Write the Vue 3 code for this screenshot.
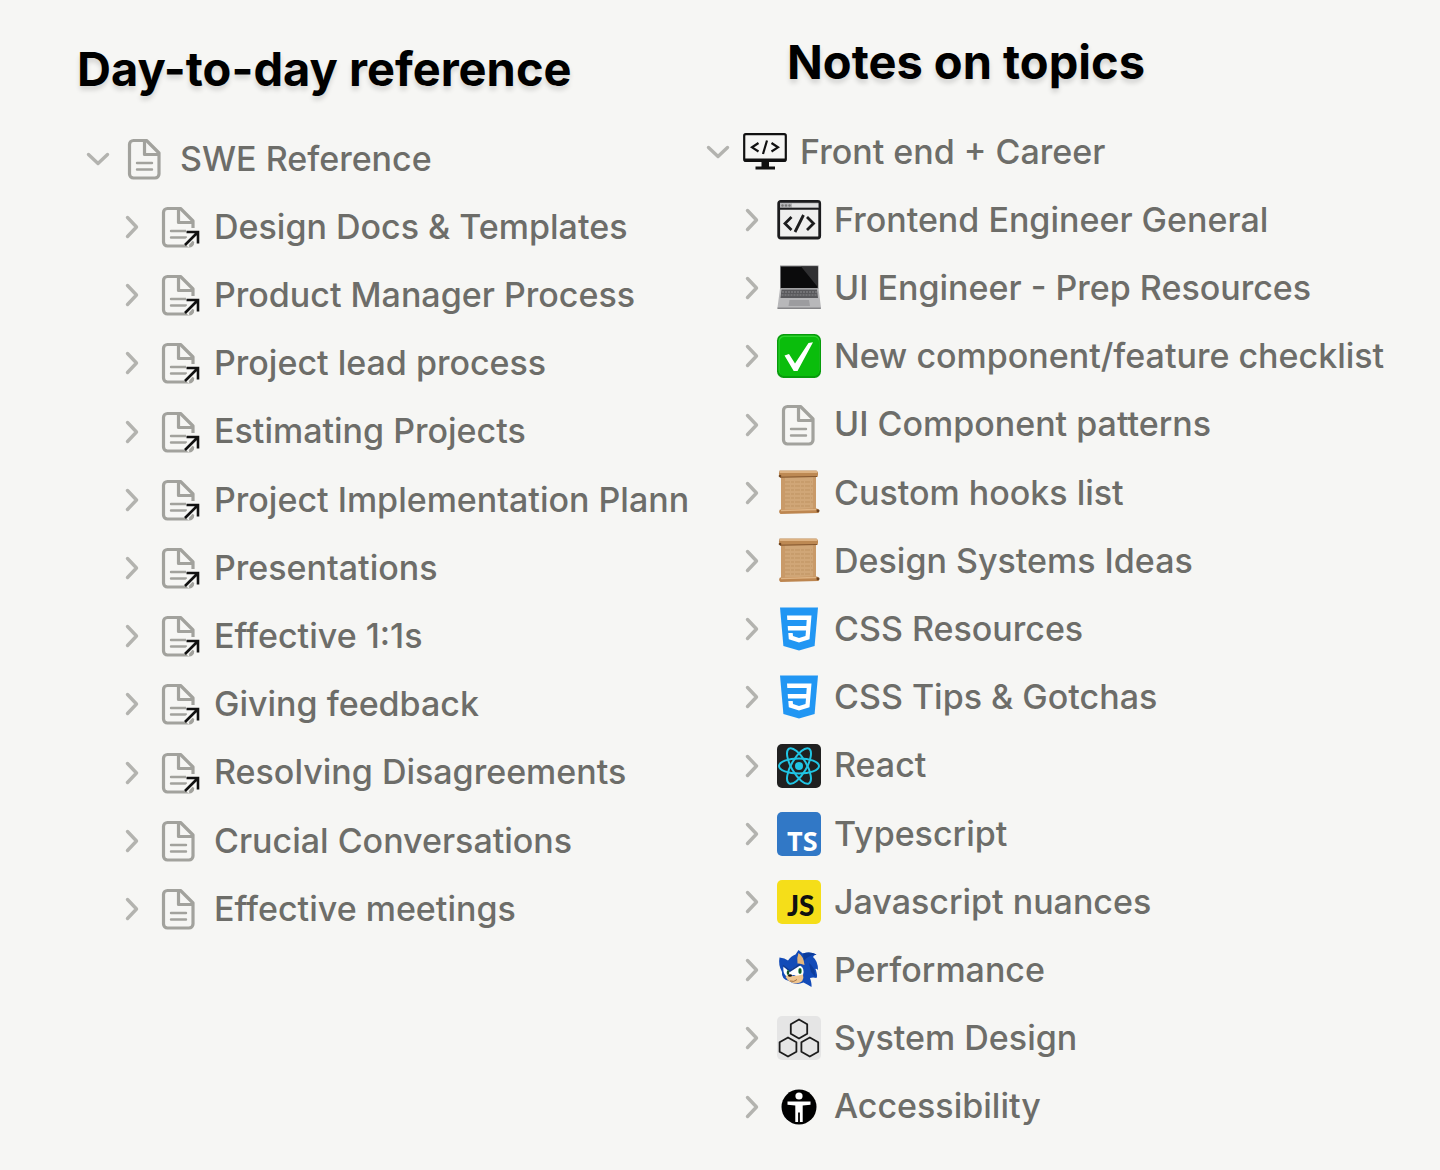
<script setup>
import { ref } from 'vue'

const columns = ref([
  {
    id: 'daily',
    title: 'Day-to-day reference',
    root: { label: 'SWE Reference', icon: 'page' },
    items: [
      { label: 'Design Docs & Templates', icon: 'alias' },
      { label: 'Product Manager Process', icon: 'alias' },
      { label: 'Project lead process', icon: 'alias' },
      { label: 'Estimating Projects', icon: 'alias' },
      { label: 'Project Implementation Plann', icon: 'alias' },
      { label: 'Presentations', icon: 'alias' },
      { label: 'Effective 1:1s', icon: 'alias' },
      { label: 'Giving feedback', icon: 'alias' },
      { label: 'Resolving Disagreements', icon: 'alias' },
      { label: 'Crucial Conversations', icon: 'page' },
      { label: 'Effective meetings', icon: 'page' },
    ],
  },
  {
    id: 'topics',
    title: 'Notes on topics',
    root: { label: 'Front end + Career', icon: 'monitor' },
    items: [
      { label: 'Frontend Engineer General', icon: 'browser' },
      { label: 'UI Engineer - Prep Resources', icon: 'laptop' },
      { label: 'New component/feature checklist', icon: 'check' },
      { label: 'UI Component patterns', icon: 'page' },
      { label: 'Custom hooks list', icon: 'scroll' },
      { label: 'Design Systems Ideas', icon: 'scroll' },
      { label: 'CSS Resources', icon: 'css' },
      { label: 'CSS Tips & Gotchas', icon: 'css' },
      { label: 'React', icon: 'react' },
      { label: 'Typescript', icon: 'ts' },
      { label: 'Javascript nuances', icon: 'js' },
      { label: 'Performance', icon: 'hedgehog' },
      { label: 'System Design', icon: 'hexes' },
      { label: 'Accessibility', icon: 'access' },
    ],
  },
])

const rowsOf = (col) => [
  { ...col.root, root: true },
  ...col.items,
]
</script>

<template>
  <main class="page">
    <section v-for="col in columns" :key="col.id" class="column" :class="col.id">
      <h1 class="title">{{ col.title }}</h1>
      <ul class="tree">
        <li v-for="row in rowsOf(col)" :key="row.label" class="row" :class="{ child: !row.root }">
          <button class="toggle" type="button" :aria-expanded="!!row.root" :aria-label="'Toggle ' + row.label">
            <svg class="chevron" viewBox="0 0 24 24" aria-hidden="true">
              <path v-if="row.root" d="M2.500 7.500l9.500 9 9.500-9" />
              <path v-else d="M7.500 2.500l9 9.500-9 9.500" />
            </svg>
          </button>
          <svg class="icon" viewBox="0 0 44 44" aria-hidden="true">
            <g v-if="row.icon === 'page' || row.icon === 'alias'" fill="none" stroke="#a2a29d" stroke-width="3.200" stroke-linejoin="round" stroke-linecap="round">
              <path d="M10.500 3.500H23.500L36 16V37a4 4 0 0 1-4 4H10.500a4 4 0 0 1-4-4V7.500a4 4 0 0 1 4-4z" />
              <path d="M21.500 4.500V17.500H35" />
              <path d="M14 26H29M14 32.500H29" stroke-width="2.400" />
              <g v-if="row.icon === 'alias'" stroke-linecap="butt" stroke-linejoin="miter">
                <path d="M29 27H41V39M41 27L28.500 39.500" stroke="#f6f6f4" stroke-width="8" />
                <path d="M32.500 41L36.500 36.500" stroke-width="2.500" />
                <path d="M29.500 27H41V38.500M41 27L28 40" stroke="#111" stroke-width="2.600" />
              </g>
            </g>

            <g v-else-if="row.icon === 'monitor'">
              <rect x="1.200" y="4.200" width="41.600" height="26.600" rx="1.500" fill="none" stroke="#111" stroke-width="2.200" />
              <path d="M1 28.500H43V31.500H1z" fill="#111" />
              <path d="M18.500 31h7.500v5.500h6v3H12.500v-3h6z" fill="#111" />
              <path d="M15.500 13L9 17.300l6.500 4.200M28.500 13l6.500 4.300-6.500 4.200M24 10.500L20 24" fill="none" stroke="#111" stroke-width="2.200" />
            </g>

            <g v-else-if="row.icon === 'browser'">
              <rect x="1.700" y="3.500" width="41" height="36.500" rx="2" fill="#efefef" stroke="#1c1c1e" stroke-width="2.800" />
              <path d="M3 4.800H41.500V10.500H3z" fill="#b4b4b6" />
              <path d="M15 5.500H41V9.500H15z" fill="#dededf" />
              <path d="M2 10.800H42.500" stroke="#1c1c1e" stroke-width="2" />
              <circle cx="5.500" cy="7.500" r="1.200" fill="#777" />
              <circle cx="9" cy="7.500" r="1.200" fill="#777" />
              <circle cx="12.500" cy="7.500" r="1.200" fill="#777" />
              <path d="M14.500 19L8 25.500l6.500 6.500M30 19l6.500 6.500L30 32M26.500 17L18 34" fill="none" stroke="#1c1c1e" stroke-width="2.800" />
            </g>

            <g v-else-if="row.icon === 'laptop'">
              <path d="M3-.5H41.500V23H3z" fill="#8b8b8d" />
              <path d="M3.800.5H40.700V22H3.800z" fill="#0b0b0c" />
              <path d="M24 .5H40.700V21z" fill="#303032" />
              <path d="M3 22.500H41.500L44 41.500Q44 43 42 43H2Q0 43 .5 41.500z" fill="#b8b8ba" />
              <path d="M4.500 23.500H40L41 32H3.500z" fill="#59595c" />
              <path d="M5 26H40M4.500 29H40.500" stroke="#a0a0a4" stroke-width=".7" stroke-dasharray="2 1" />
              <path d="M12.500 34H32L33 40H11.500z" fill="#9c9c9f" />
              <path d="M.5 41.500H43.800V43H.5z" fill="#858588" />
            </g>

            <g v-else-if="row.icon === 'check'">
              <rect width="44" height="44" rx="6.500" fill="#079c0b" />
              <rect x="1.500" y="1.500" width="41" height="40" rx="5.500" fill="#2dd42d" />
              <rect x="2.500" y="3" width="39.500" height="39" rx="5" fill="#0abd0c" />
              <path d="M7.500 21.500l4.500-1.500 6 9.500L31.500 9l4.500-.8L20.500 37h-3.800z" fill="#fff" />
            </g>

            <g v-else-if="row.icon === 'scroll'">
              <path d="M4 5H39V40H4z" fill="#d0a677" />
              <path d="M4 5h4v35H4zM36 5h3v35h-3z" fill="#c4935f" opacity=".6" />
              <path d="M8 11H35M8 15H36M8 19H35M8 23H36M8 27H35M8 31H36M8 35H34" stroke="#b58957" stroke-width="1" stroke-dasharray="5 1 3 1" opacity=".6" />
              <path d="M2.500-.5H39.500Q42 1 40.500 6L3 6.500Q1 3 2.500-.5z" fill="#bd8953" />
              <path d="M3 1H40" stroke="#ddb282" stroke-width="2" />
              <path d="M3 6.200L40 5.500" stroke="#83562e" stroke-width="1" />
              <path d="M3 38.500L40 37.500Q43 39 41.500 42L3.500 43Q1 41 3 38.500z" fill="#bd8650" />
              <path d="M4 39.500L39 38.500" stroke="#deb383" stroke-width="1.500" />
              <circle cx="41" cy="39.800" r="1.500" fill="#714621" />
              <circle cx="3" cy="5" r="1.300" fill="#714621" />
            </g>

            <g v-else-if="row.icon === 'css'">
              <path d="M3 .5H41L37.600 39L22 43.500 6.400 39z" fill="#2196f3" />
              <path d="M10 8.500H34.500L32.500 32.200L22 35.500L11.800 32.200L11.300 26H15.700L16 29L22 31L28.500 29L29 23.500H11L10.700 19H29.300L29.700 13H10.300z" fill="#fff" />
            </g>

            <g v-else-if="row.icon === 'react'" fill="none" stroke="#20c5e4" stroke-width="2">
              <rect width="44" height="44" rx="5" fill="#202020" stroke="none" />
              <ellipse cx="22" cy="22" rx="20" ry="7.600" />
              <ellipse cx="22" cy="22" rx="20" ry="7.600" transform="rotate(60 22 22)" />
              <ellipse cx="22" cy="22" rx="20" ry="7.600" transform="rotate(120 22 22)" />
              <circle cx="22" cy="22" r="4" fill="#20c5e4" stroke="none" />
            </g>

            <g v-else-if="row.icon === 'ts'">
              <rect width="44" height="44" rx="5" fill="#3178c6" />
              <text x="10" y="39" class="logo ts-logo">TS</text>
            </g>

            <g v-else-if="row.icon === 'js'">
              <rect width="44" height="44" rx="5" fill="#f5de19" />
              <text x="10" y="36" class="logo js-logo">JS</text>
            </g>

            <g v-else-if="row.icon === 'hedgehog'">
              <path d="M2.500 9.500Q8 10 11 12.500Q14 8 18.500 6.500L21.500 2Q24 4 26 5.500Q33 3 39.500 6.500Q36.500 7 36 9Q41 13 41 22Q39 20 38.500 21Q41 28 39.500 30Q36 29 33 30Q35 36 34.500 39Q30 36 26.500 34.500Q18 38 12 33Q4 31 5 24Q1 17 2.500 9.500z" fill="#134bb8" />
              <path d="M26 5.500Q33 3 39.500 6.500Q31 7 27 13zM32 15Q38 19 38.500 29L34 24z" fill="#0c3c9c" />
              <path d="M21.500 5Q26.500 8 27.500 17Q23 15 20.500 15.500Q19.500 10 21.500 5z" fill="#e4b67c" />
              <path d="M6.500 18Q9 20 12.500 24Q17 18 23 17.500Q28 20 26 27Q22 30 17 27L9 28Q5.500 25 6.500 18z" fill="#fff" />
              <path d="M10.500 27Q17 29 26 26.500Q28 34 19.500 35.500Q12 35 8.500 29z" fill="#f0c58f" />
              <path d="M6 17.500L13 23L23 16.500" fill="none" stroke="#10398e" stroke-width="1.500" />
              <ellipse cx="23" cy="23" rx="1.700" ry="3" fill="#239247" />
              <ellipse cx="11" cy="24.500" rx="1.300" ry="2.500" fill="#239247" />
              <path d="M23 21v4M11 23v3" stroke="#111" />
              <ellipse cx="13" cy="27.500" rx="2" ry="1.300" fill="#111" />
              <path d="M13 33Q17 34.500 20 31.500" fill="none" stroke="#8c5b32" stroke-width=".8" />
            </g>

            <g v-else-if="row.icon === 'hexes'" fill="none" stroke="#1c1c1c" stroke-width="1.800" stroke-linejoin="round">
              <rect width="44" height="44" rx="5" fill="#e5e5e5" stroke="none" />
              <path d="M22 3.500l8.200 4.800v9.400L22 22.500l-8.200-4.800V8.300z" />
              <path d="M11 21.500l8.400 4.800v9.400L11 40.500l-8.400-4.800v-9.400z" />
              <path d="M32.800 21.500l8.400 4.800v9.400l-8.400 4.800-8.400-4.800v-9.400z" />
            </g>

            <g v-else>
              <circle cx="22" cy="22" r="17.500" fill="#000" />
              <circle cx="22" cy="11" r="3.600" fill="#fff" />
              <path d="M10.500 16.500h23v3.200l-7.800.8v16.500h-2.800v-9.500h-1.800V37h-2.800V20.500l-7.800-.8z" fill="#fff" />
            </g>
          </svg>
          <a class="label" href="#">{{ row.label }}</a>
        </li>
      </ul>
    </section>
  </main>
</template>

<style>
html,
body {
  margin: 0;
  background: #f6f6f4;
}
</style>

<style scoped>
.page {
  display: grid;
  grid-template-columns: minmax(0, 5fr) minmax(0, 6fr);
  align-items: start;
  padding-left: 76px;
  font-family: Inter, "Liberation Sans", sans-serif;
}

.column {
  padding-top: 35px;
}

.column.topics {
  padding-top: 28px;
}

.title {
  margin: 0 0 22px;
  padding-left: 1px;
  font-size: 47px;
  line-height: 68px;
  font-weight: 700;
  color: #000;
  white-space: nowrap;
  text-shadow: 0 4px 5px rgba(0, 0, 0, 0.14);
}

.topics .title {
  padding-left: 91px;
}

.tree {
  margin: 0;
  padding: 0 0 0 10px;
  list-style: none;
}

.row {
  display: flex;
  align-items: center;
  gap: 13px;
  height: 68px;
}

.row.child {
  padding-left: 34px;
}

.row:nth-child(5n) {
  height: 69px;
}

.toggle {
  flex: none;
  width: 24px;
  height: 24px;
  padding: 0;
  border: 0;
  background: none;
  cursor: pointer;
}

.chevron {
  display: block;
  width: 24px;
  height: 24px;
  fill: none;
  stroke: #b3b3af;
  stroke-width: 3.4;
  stroke-linecap: round;
  stroke-linejoin: round;
}

.icon {
  flex: none;
  width: 44px;
  height: 44px;
  overflow: visible;
}

.label {
  padding-bottom: 2px;
  font-size: 34px;
  font-weight: 500;
  color: #6d6d69;
  text-decoration: none;
  white-space: nowrap;
}

.ts-logo {
  font-family: "Open Sans", sans-serif;
  font-size: 27px;
  font-weight: 700;
  fill: #fff;
}

.js-logo {
  font-family: Lato, sans-serif;
  font-size: 28px;
  font-weight: 900;
  fill: #111;
}
</style>
